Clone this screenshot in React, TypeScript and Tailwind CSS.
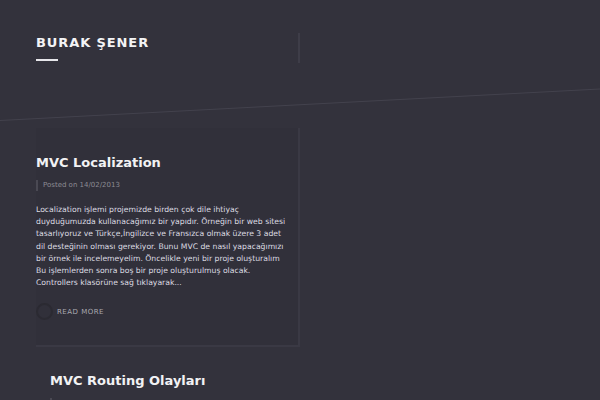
const posts = [
  {
    title: "MVC Localization",
    date: "14/02/2013",
    lines: [
      "Localization işlemi projemizde birden çok dile ihtiyaç",
      "duyduğumuzda kullanacağımız bir yapıdır. Örneğin bir web sitesi",
      "tasarlıyoruz ve Türkçe,İngilizce ve Fransızca olmak üzere 3 adet",
      "dil desteğinin olması gerekiyor. Bunu MVC de nasıl yapacağımızı",
      "bir örnek ile incelemeyelim. Öncelikle yeni bir proje oluşturalım",
      "Bu işlemlerden sonra boş bir proje oluşturulmuş olacak.",
      "Controllers klasörüne sağ tıklayarak...",
    ],
  },
  {
    title: "MVC Routing Olayları",
    date: "14/02/2013",
    lines: [],
  },
];

const PostCard = ({ post, index }: { post: (typeof posts)[number]; index: number }) => {
  return (
    <article
      className={
        index === 0
          ? "w-[264px] bg-[#31303a] border-r-2 border-b-2 border-[#3a3944] pt-[27px] pb-[25px]"
          : "ml-[14px] w-[264px] pt-[26px] pb-[24px]"
      }
    >
      <h2 className="text-[13px] leading-[16px] font-bold text-[#f2f2f4]">{post.title}</h2>
      <div className="mt-[9px] h-[11px] flex items-center border-l-2 border-[#4a4953] pl-[5px] text-[7px] text-[#8c8b93]">
        Posted on {post.date}
      </div>
      {post.lines.length > 0 && (
        <>
          <p className="mt-[13px] text-[7.7px] leading-[12.2px] text-[#dddce2]">
            {post.lines.map((line, i) => (
              <span key={i} className="block whitespace-nowrap">
                {line}
              </span>
            ))}
          </p>
          <a href="#" className="mt-[14px] flex items-center gap-[4px]">
            <span className="w-[17px] h-[17px] rounded-full border-2 border-[#2b2a32]" />
            <span className="text-[7px] tracking-[0.5px] text-[#aaa9b0]">READ MORE</span>
          </a>
        </>
      )}
    </article>
  );
};

export default function App() {
  return (
    <div
      className="relative w-full h-[400px] overflow-hidden bg-[#33323c]"
      style={{ fontFamily: '"DejaVu Sans", sans-serif' }}
    >
      <svg className="absolute inset-0 pointer-events-none" width="600" height="400">
        <line x1="0" y1="120.5" x2="600" y2="89" stroke="#43424d" strokeWidth="1" />
      </svg>

      <div className="relative pl-[36px] pt-[33px]">
        <header className="w-[264px] h-[30px] border-r-2 border-[#3e3d48] pt-[2px]">
          <h1 className="text-[13px] leading-[16px] font-bold tracking-[0.9px] text-[#f4f4f6]">
            BURAK ŞENER
          </h1>
          <div className="mt-[8px] w-[22px] h-[2px] bg-[#e6e6ea]" />
        </header>

        <div className="mt-[65px] flex flex-col">
          {posts.map((post, i) => (
            <PostCard key={i} post={post} index={i} />
          ))}
        </div>
      </div>
    </div>
  );
}
